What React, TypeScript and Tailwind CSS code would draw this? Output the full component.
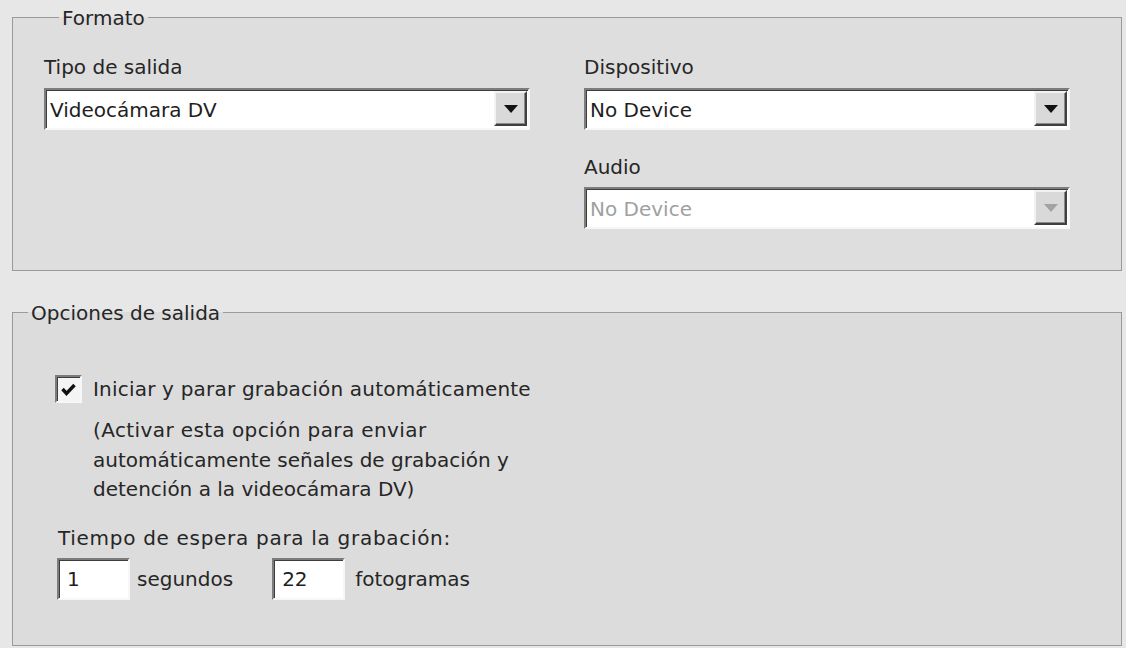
const font = "font-['DejaVu_Sans','Liberation_Sans',sans-serif]";

function Arrow({ disabled }: { disabled?: boolean }) {
  return (
    <svg width="14" height="8" viewBox="0 0 14 8">
      <path d="M0 0h14L7 8z" fill={disabled ? "#a2a2a2" : "#111"} />
    </svg>
  );
}

function Select({ value, disabled }: { value: string; disabled?: boolean }) {
  return (
    <div className="flex h-[42px] w-full border-2 border-t-[#7c7c7c] border-l-[#7c7c7c] border-b-[#f7f7f7] border-r-[#f7f7f7] bg-white shadow-[inset_1px_1px_0_#3e3e3e]">
      <div
        className={`flex flex-1 items-center pl-[4px] pt-[1px] ${
          disabled ? "text-[#a0a0a0]" : "text-[#1e1e1e]"
        }`}
      >
        {value}
      </div>
      <div className="mt-[1px] mb-[2px] mr-[1px] flex w-[33px] items-center justify-center border-2 border-t-[#f2f2f2] border-l-[#f2f2f2] border-b-[#3f3f3f] border-r-[#3f3f3f] bg-[#d9d9d9] shadow-[inset_-1px_-1px_0_#8a8a8a]">
        <Arrow disabled={disabled} />
      </div>
    </div>
  );
}

function NumberBox({ value }: { value: string }) {
  return (
    <div className="flex h-[42px] w-[73px] items-center border-2 border-t-[#7c7c7c] border-l-[#7c7c7c] border-b-[#f7f7f7] border-r-[#f7f7f7] bg-white pl-[8px] text-[#1e1e1e] shadow-[inset_1px_1px_0_#3e3e3e]">
      {value}
    </div>
  );
}

export default function App() {
  return (
    <div
      className={`${font} flex h-[648px] w-[1126px] flex-col bg-[#e7e7e7] pl-[12px] pr-[4px] pt-[5px] text-[20px] text-[#262626]`}
    >
      <fieldset className="h-[266px] border border-[#9a9a9a] bg-[#dedede] pl-[31px] pr-[51px]">
        <legend className="ml-[15px] px-[3px] pt-[2px] leading-[22px]">Formato</legend>
        <div className="mt-[26px] flex gap-[54px]">
          <div className="flex flex-1 flex-col">
            <div className="mb-[9px] leading-[24px]">Tipo de salida</div>
            <Select value="Videocámara DV" />
          </div>
          <div className="flex flex-1 flex-col">
            <div className="mb-[9px] leading-[24px]">Dispositivo</div>
            <Select value="No Device" />
            <div className="mt-[25px] mb-[8px] leading-[24px]">Audio</div>
            <Select value="No Device" disabled />
          </div>
        </div>
      </fieldset>

      <fieldset className="mt-[29px] h-[346px] border border-[#9a9a9a] bg-[#dcdcdc]">
        <legend className="ml-[15px] px-[3px] pt-[2px] leading-[22px]">Opciones de salida</legend>
        <div className="pl-[42px]">
          <div className="mt-[50px] flex items-center gap-[11px]">
            <div className="flex h-[28px] w-[27px] items-center justify-center border-2 border-t-[#7c7c7c] border-l-[#7c7c7c] border-b-[#f7f7f7] border-r-[#f7f7f7] bg-[#f4f4f4] shadow-[inset_1px_1px_0_#3e3e3e]">
              <svg width="15" height="13" viewBox="0 0 15 13">
                <path d="M1.5 6l4 4.5L13.5 2" fill="none" stroke="#111" strokeWidth="3.4" />
              </svg>
            </div>
            <span className="tracking-[0.2px]">Iniciar y parar grabación automáticamente</span>
          </div>
          <div className="mt-[12px] pl-[38px] leading-[29.5px]">
            <span className="tracking-[0.4px]">(Activar esta opción para enviar</span>
            <br />
            automáticamente señales de grabación y
            <br />
            detención a la videocámara DV)
          </div>
          <div className="mt-[21px] pl-[3px] leading-[24px] tracking-[0.7px]">
            Tiempo de espera para la grabación:
          </div>
          <div className="mt-[8px] flex items-center pl-[2px]">
            <NumberBox value="1" />
            <span className="ml-[7px] mr-[39px]">segundos</span>
            <NumberBox value="22" />
            <span className="ml-[10px]">fotogramas</span>
          </div>
        </div>
      </fieldset>
    </div>
  );
}
